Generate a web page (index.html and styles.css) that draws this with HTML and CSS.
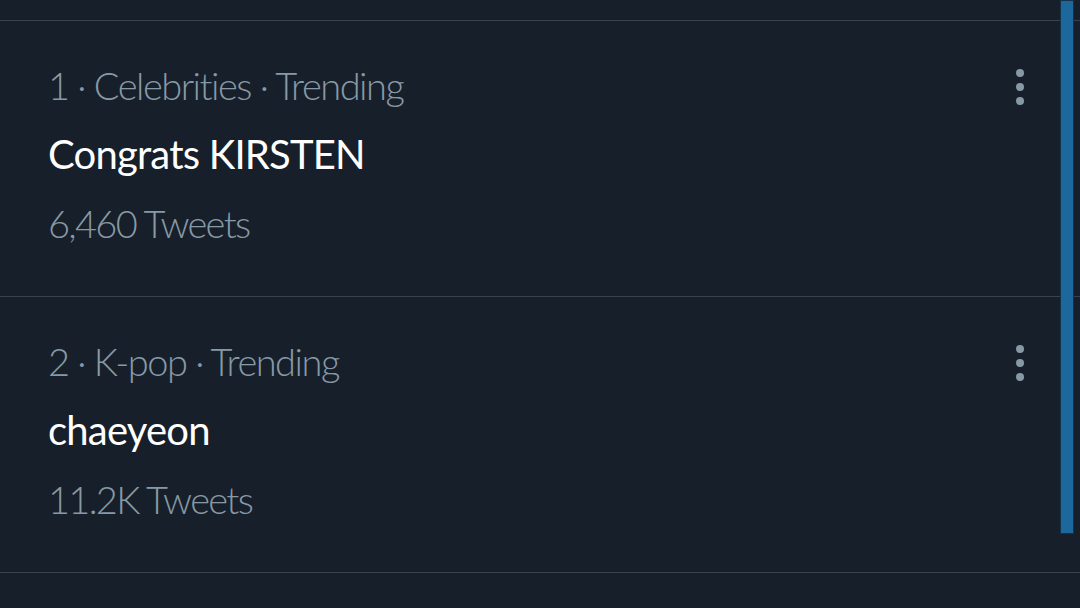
FILE: index.html
```html
<!DOCTYPE html>
<html>
<head>
<meta charset="utf-8">
<link rel="stylesheet" href="styles.css">
</head>
<body>
<div class="page">
  <div class="list">
    <div class="top"></div>
    <div class="trend">
      <div class="text">
        <div class="meta">1 · Celebrities · Trending</div>
        <div class="title">Congrats KIRSTEN</div>
        <div class="count">6,460 Tweets</div>
      </div>
      <div class="more"><span></span><span></span><span></span></div>
    </div>
    <div class="trend">
      <div class="text">
        <div class="meta">2 · K-pop · Trending</div>
        <div class="title">chaeyeon</div>
        <div class="count">11.2K Tweets</div>
      </div>
      <div class="more"><span></span><span></span><span></span></div>
    </div>
  </div>
  <div class="scrollbar"></div>
</div>
</body>
</html>
```
FILE: styles.css
```css
html, body {
  margin: 0;
  padding: 0;
  background: #17202a;
}
.page {
  position: relative;
  width: 1080px;
  height: 608px;
  overflow: hidden;
  font-family: Lato, "Liberation Sans", sans-serif;
}
.top {
  height: 20px;
  border-bottom: 1px solid #38444d;
}
.trend {
  height: 275px;
  border-bottom: 1px solid #38444d;
  display: flex;
  justify-content: space-between;
}
.text {
  padding: 30px 0 0 48px;
}
.meta, .count {
  font-size: 38px;
  font-weight: 300;
  color: #8899a6;
  line-height: 68px;
}
.meta {
  letter-spacing: -1.5px;
}
.count {
  letter-spacing: -1.7px;
}
.title {
  font-size: 40px;
  font-weight: 400;
  color: #ffffff;
  line-height: 70px;
  letter-spacing: -0.8px;
}
.more {
  display: flex;
  flex-direction: column;
  gap: 6px;
  margin: 48px 56px 0 0;
}
.more span {
  width: 8px;
  height: 8px;
  border-radius: 50%;
  background: #8899a6;
}
.scrollbar {
  position: absolute;
  left: 1060px;
  top: 0;
  width: 12px;
  height: 532px;
  background: #1c679c;
  border: 1px solid #14324a;
}
```
